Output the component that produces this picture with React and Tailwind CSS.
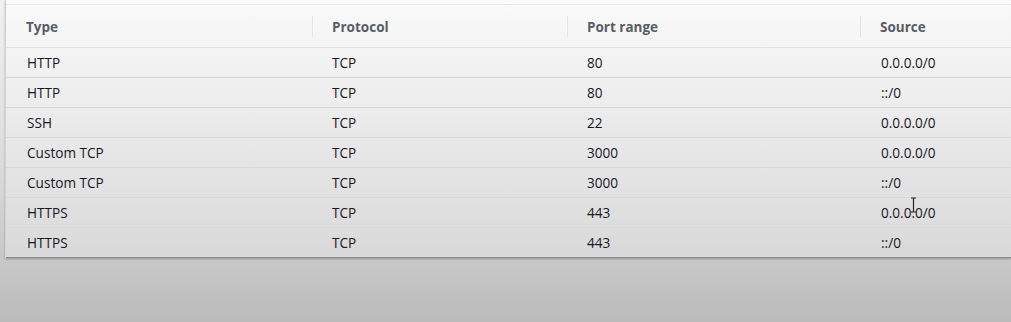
const RULES = [
  { type: "HTTP", protocol: "TCP", port: "80", source: "0.0.0.0/0" },
  { type: "HTTP", protocol: "TCP", port: "80", source: "::/0" },
  { type: "SSH", protocol: "TCP", port: "22", source: "0.0.0.0/0" },
  { type: "Custom TCP", protocol: "TCP", port: "3000", source: "0.0.0.0/0" },
  { type: "Custom TCP", protocol: "TCP", port: "3000", source: "::/0" },
  { type: "HTTPS", protocol: "TCP", port: "443", source: "0.0.0.0/0" },
  { type: "HTTPS", protocol: "TCP", port: "443", source: "::/0" },
];

const COLS = "grid grid-cols-[306px_255px_293px_1fr]";

function HeaderCell({ children, divider }) {
  return (
    <div className="relative flex items-center pl-[20px] pt-[2px]">
      {divider && (
        <span className="absolute left-0 top-[11px] h-[21px] w-px bg-[#e4e4e4]" />
      )}
      {children}
    </div>
  );
}

export default function App() {
  return (
    <div
      className="relative h-[322px] w-[1011px] overflow-hidden bg-linear-to-b from-[#f1f1f1] via-[#dcdcdc] to-[#bbbbbb]"
      style={{ fontFamily: '"Open Sans", "Liberation Sans", sans-serif' }}
    >
      <div className="ml-[5px] h-[258px] border-l border-[#d2d2d2] bg-linear-to-b from-[#fafafa] to-[#d9d9d9] shadow-[0_1px_2px_rgba(0,0,0,0.25)]">
        <div className="h-[5px] border-b border-[#e6e6e6]" />

        {/* Header */}
        <div
          className={`${COLS} h-[43px] border-b border-[#e2e2e2] text-[13.5px] font-bold text-[#585d64]`}
        >
          <HeaderCell>Type</HeaderCell>
          <HeaderCell divider>Protocol</HeaderCell>
          <HeaderCell divider>Port range</HeaderCell>
          <HeaderCell divider>Source</HeaderCell>
        </div>

        {/* Rows */}
        {RULES.map((r, i) => (
          <div
            key={i}
            className={`${COLS} h-[30px] pt-[2px] text-[13.6px] text-[#16191f] ${
              i === RULES.length - 1
                ? "border-b border-[#8a8a8a]"
                : "border-b border-[#d8d8d8]"
            }`}
          >
            <div className="flex items-center pl-[21px]">{r.type}</div>
            <div className="flex items-center pl-[20px]">{r.protocol}</div>
            <div className="flex items-center pl-[20px]">{r.port}</div>
            <div className="flex items-center pl-[21px]">{r.source}</div>
          </div>
        ))}
      </div>

      {/* text cursor */}
      <svg
        className="absolute left-[910px] top-[197px]"
        width="7"
        height="16"
        viewBox="0 0 7 16"
      >
        <path
          d="M1 1h5M3.5 1v14M1 15h5"
          stroke="#222"
          strokeWidth="1.2"
          fill="none"
        />
      </svg>
    </div>
  );
}
